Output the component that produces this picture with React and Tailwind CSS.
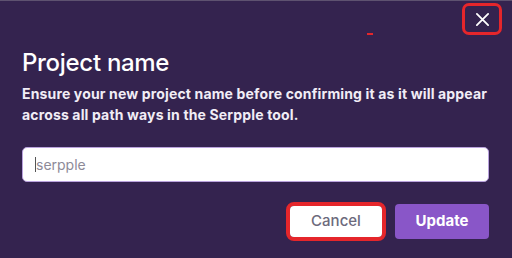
import React from "react";

export default function App() {
  return (
    <div
      className="relative w-[512px] h-[258px] overflow-hidden bg-[#34234f] border-t border-[#5e5270] text-white"
      style={{ fontFamily: "Inter, 'Noto Sans', sans-serif" }}
    >
      <div className="flex justify-end pt-[2px] pr-[10px]">
        <button className="w-[40px] h-[32px] rounded-[7px] border-[3px] border-[#e5262b] flex items-center justify-center">
          <svg width="15" height="15" viewBox="0 0 16 16" fill="none" stroke="#ffffff" strokeWidth="1.9" strokeLinecap="round">
            <path d="M2 2 L14 14 M14 2 L2 14" />
          </svg>
        </button>
      </div>
      <div className="absolute left-[367px] top-[32px] w-[6px] h-[2px] bg-[#e5262b]" />

      <div className="px-[22px]">
        <h1 className="mt-[13px] text-[24px] leading-[30px] font-medium tracking-[-0.3px]">Project name</h1>
        <p className="mt-[5px] text-[14px] leading-[21px] font-bold tracking-[0.15px] text-[#f1edf6]">
          Ensure your new project name before confirming it as it will appear across all path ways in the Serpple tool.
        </p>

        <div className="mt-[22px] mr-[1px] h-[35px] bg-white rounded-[5px] border-[1.5px] border-[#b9a2dd] flex items-center pl-[12px]">
          <span className="w-[1px] h-[15px] bg-[#555]" />
          <span className="text-[14px] text-[#8d8a98]">serpple</span>
        </div>

        <div className="mt-[20px] flex justify-end items-center gap-[9px] pr-[1px]">
          <div className="rounded-[8px] border-[4px] border-[#e5262b]">
            <button className="w-[92px] h-[31px] bg-white rounded-[4px] text-[15px] text-[#6c6a7c] font-medium">
              Cancel
            </button>
          </div>
          <button className="w-[94px] h-[35px] bg-[#8956c8] rounded-[4px] text-[15px] font-bold text-white">
            Update
          </button>
        </div>
      </div>
    </div>
  );
}
